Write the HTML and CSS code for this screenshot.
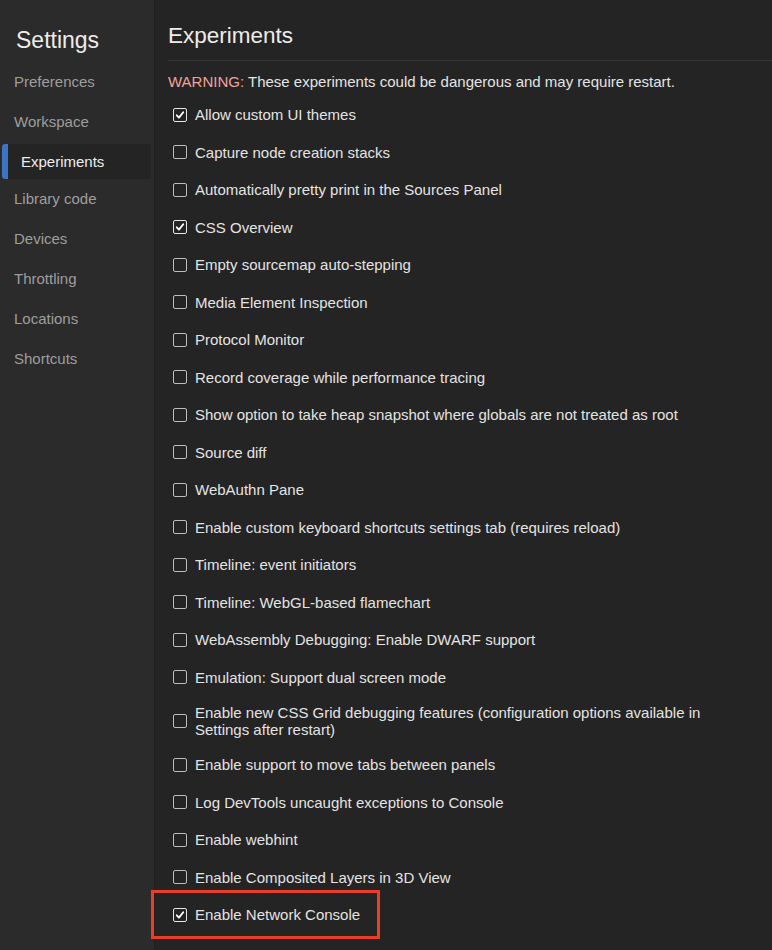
FILE: index.html
```html
<!DOCTYPE html>
<html lang="en">
<head>
<meta charset="utf-8">
<title>Settings</title>
<link rel="stylesheet" href="styles.css">
</head>
<body>
<div class="app">
  <aside class="sidebar">
    <h1 class="side-title">Settings</h1>
    <nav class="nav">
      <div class="nav-item">Preferences</div>
      <div class="nav-item">Workspace</div>
      <div class="nav-item selected">Experiments</div>
      <div class="nav-item">Library code</div>
      <div class="nav-item">Devices</div>
      <div class="nav-item">Throttling</div>
      <div class="nav-item">Locations</div>
      <div class="nav-item">Shortcuts</div>
    </nav>
  </aside>
  <main class="main">
    <h2 class="heading">Experiments</h2>
    <p class="warning"><span class="warn-label">WARNING:</span> These experiments could be dangerous and may require restart.</p>
    <div class="list">
      <label class="row"><span class="cb checked"><svg viewBox="0 0 14 14"><path d="M3.2 7.4 L5.8 10 L10.8 3.8" /></svg></span><span class="txt">Allow custom UI themes</span></label>
      <label class="row"><span class="cb"></span><span class="txt">Capture node creation stacks</span></label>
      <label class="row"><span class="cb"></span><span class="txt">Automatically pretty print in the Sources Panel</span></label>
      <label class="row"><span class="cb checked"><svg viewBox="0 0 14 14"><path d="M3.2 7.4 L5.8 10 L10.8 3.8" /></svg></span><span class="txt">CSS Overview</span></label>
      <label class="row"><span class="cb"></span><span class="txt">Empty sourcemap auto-stepping</span></label>
      <label class="row"><span class="cb"></span><span class="txt">Media Element Inspection</span></label>
      <label class="row"><span class="cb"></span><span class="txt">Protocol Monitor</span></label>
      <label class="row"><span class="cb"></span><span class="txt">Record coverage while performance tracing</span></label>
      <label class="row"><span class="cb"></span><span class="txt">Show option to take heap snapshot where globals are not treated as root</span></label>
      <label class="row"><span class="cb"></span><span class="txt">Source diff</span></label>
      <label class="row"><span class="cb"></span><span class="txt">WebAuthn Pane</span></label>
      <label class="row"><span class="cb"></span><span class="txt">Enable custom keyboard shortcuts settings tab (requires reload)</span></label>
      <label class="row"><span class="cb"></span><span class="txt">Timeline: event initiators</span></label>
      <label class="row"><span class="cb"></span><span class="txt">Timeline: WebGL-based flamechart</span></label>
      <label class="row"><span class="cb"></span><span class="txt">WebAssembly Debugging: Enable DWARF support</span></label>
      <label class="row"><span class="cb"></span><span class="txt">Emulation: Support dual screen mode</span></label>
      <label class="row"><span class="cb"></span><span class="txt">Enable new CSS Grid debugging features (configuration options available in Settings after restart)</span></label>
      <label class="row"><span class="cb"></span><span class="txt">Enable support to move tabs between panels</span></label>
      <label class="row"><span class="cb"></span><span class="txt">Log DevTools uncaught exceptions to Console</span></label>
      <label class="row"><span class="cb"></span><span class="txt">Enable webhint</span></label>
      <label class="row"><span class="cb"></span><span class="txt">Enable Composited Layers in 3D View</span></label>
      <label class="row highlighted"><span class="cb checked"><svg viewBox="0 0 14 14"><path d="M3.2 7.4 L5.8 10 L10.8 3.8" /></svg></span><span class="txt">Enable Network Console</span><span class="callout"></span></label>
    </div>
  </main>
</div>
</body>
</html>
```

FILE: styles.css
```css
* { box-sizing: border-box; }
html, body {
  margin: 0;
  padding: 0;
  height: 100%;
  overflow: hidden;
  background: #242424;
}
body {
  font-family: "Liberation Sans", Arial, Helvetica, sans-serif;
  font-size: 15px;
  color: #e3e3e3;
}
.app {
  display: flex;
  height: 950px;
}
.sidebar {
  width: 155px;
  flex: none;
  background: #2b2b2b;
  border-right: 1px solid #202020;
}
.side-title {
  margin: 0;
  padding: 27px 0 0 16px;
  height: 62px;
  font-size: 23px;
  font-weight: normal;
  line-height: 26px;
  color: #ececec;
}
.nav {
  display: flex;
  flex-direction: column;
}
.nav-item {
  height: 40px;
  line-height: 40px;
  padding-left: 14px;
  font-size: 15px;
  color: #9e9e9e;
}
.nav-item.selected {
  height: 35px;
  line-height: 35px;
  margin: 2px 3px 0 2px;
  padding-left: 19px;
  background: #242424;
  color: #ededed;
  border-radius: 3px;
  position: relative;
}
.nav-item.selected::before {
  content: "";
  position: absolute;
  left: 0;
  top: 0;
  bottom: 0;
  width: 6px;
  background: #3d74c4;
  border-radius: 3px 0 0 3px;
}
.main {
  flex: 1;
  padding: 0 0 0 13px;
  position: relative;
}
.heading {
  margin: 0;
  padding-top: 24px;
  height: 61px;
  line-height: 24px;
  font-size: 22.5px;
  font-weight: normal;
  color: #ececec;
  border-bottom: 1px solid #363636;
}
.warning {
  margin: 12px 0 6px 0;
  line-height: 17px;
  font-size: 15px;
  color: #e3e3e3;
}
.warn-label {
  color: #f0a29b;
}
.list {
  display: flex;
  flex-direction: column;
}
.row {
  display: flex;
  align-items: center;
  gap: 8px;
  min-height: 37.5px;
  padding: 8px 0 8px 5px;
  line-height: 17px;
  position: relative;
}
.cb {
  flex: none;
  width: 14px;
  height: 14px;
  border: 1px solid #bdbdbd;
  border-radius: 2px;
  background: #242424;
  display: flex;
  align-items: center;
  justify-content: center;
}
.cb.checked {
  border-color: #e8e8e8;
}
.cb svg {
  width: 12px;
  height: 12px;
  fill: none;
  stroke: #ffffff;
  stroke-width: 2.2;
  stroke-linecap: round;
  stroke-linejoin: round;
}
.txt {
  max-width: 530px;
}
.callout {
  position: absolute;
  left: -17px;
  top: -6px;
  width: 229px;
  height: 49px;
  border: 3px solid #ea3f26;
  pointer-events: none;
}
```
